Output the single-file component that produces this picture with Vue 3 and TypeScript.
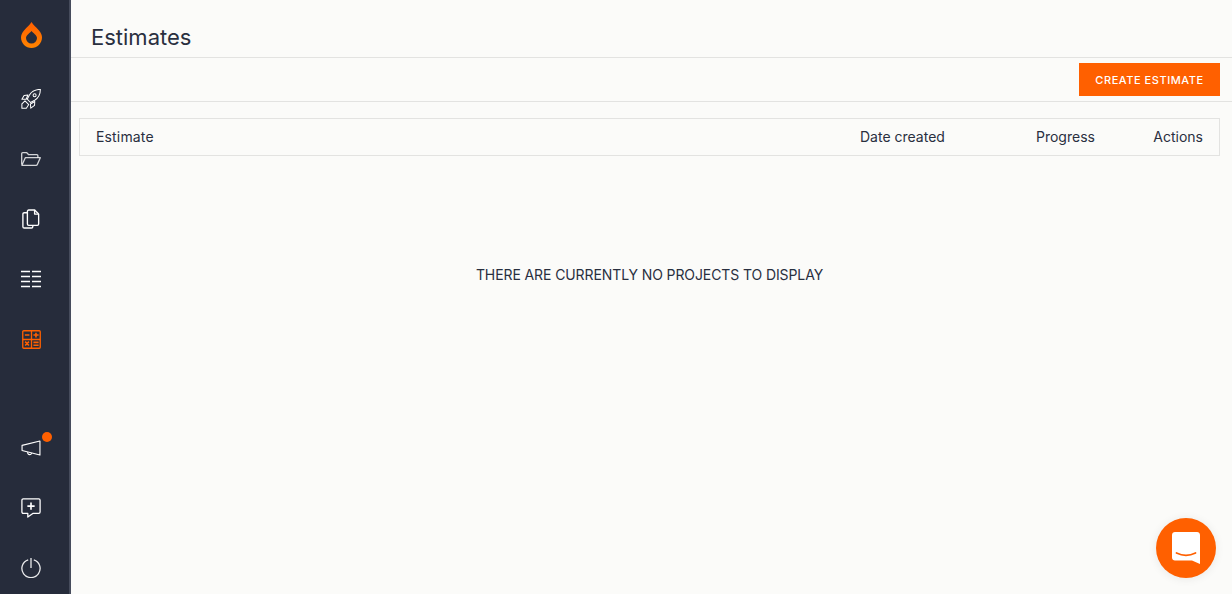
<script setup lang="ts">
const columns: { label: string; cls: string }[] = [
  { label: 'Estimate', cls: 'col-main' },
  { label: 'Date created', cls: 'col-date' },
  { label: 'Progress', cls: 'col-progress' },
  { label: 'Actions', cls: 'col-actions' },
]
</script>

<template>
  <div class="app">
    <aside class="sidebar">
      <div class="logo">
        <svg width="21" height="26" viewBox="0 0 21 26">
          <defs>
            <linearGradient id="drop" x1="0" y1="0" x2="0" y2="1">
              <stop offset="0" stop-color="#ff5f00" />
              <stop offset="1" stop-color="#ff8400" />
            </linearGradient>
          </defs>
          <path fill="url(#drop)" fill-rule="evenodd" d="M10.500 0C12 3 15 5 18 8.500 20 11 21 13 21 15.500 21 21.300 16.300 26 10.500 26S0 21.300 0 15.500C0 13 1 11 3 8.500 6 5 9 3 10.500 0ZM10.500 9C9 11 5 13 5 16a5.500 5.500 0 0 0 11 0C16 13 12 11 10.500 9Z" />
        </svg>
      </div>
      <nav class="nav">
        <a class="slot">
          <svg width="20" height="20" viewBox="1 1 22.500 22.500" fill="none" stroke="#fff" stroke-width="1.150" stroke-linejoin="round">
            <path d="M22.800 1.400c-5.700.1-9.800 2.400-12.300 6.400L8 12.500l3.700 3.700 4.700-2.500c4.200-2.500 6.400-6.500 6.400-12.300Z" />
            <circle cx="16.300" cy="8" r="1.700" />
            <path d="M8.800 7.800 4.500 8.200 2 12.600 6.800 12.600Z" />
            <path d="M16.500 15 16.200 19.500 12 22.600 11.600 17.800Z" />
            <path d="M5.500 14.300 9.700 18.500 7 22.600 2 22.600 2 17.800Z" />
          </svg>
        </a>
        <a class="slot">
          <svg width="20" height="14" viewBox="0 0 20 14" fill="none" stroke="#fff" stroke-opacity=".8" stroke-width="1.300" stroke-linejoin="round">
            <path d="M.700 12.500V1.700C.700 1.100 1.100.700 1.700.700h4.100l1.900 2h8.200c.6 0 1 .4 1 1V5.700" />
            <path d="M.900 13.300 4.300 5.700h15L16.300 12.500c-.2.500-.6.800-1.200.800Z" />
          </svg>
        </a>
        <a class="slot">
          <svg width="18" height="20" viewBox="0 0 20 22" fill="none" stroke="#fff" stroke-width="1.500" stroke-linejoin="round">
            <path d="M6 4H2.500C1.600 4 1 4.600 1 5.500v14C1 20.400 1.600 21 2.500 21h8c.9 0 1.500-.6 1.500-1.500V18" />
            <path d="M7.500 1H14v4.500h4.500V16.500c0 .9-.6 1.500-1.500 1.500H7.500C6.600 18 6 17.400 6 16.500v-14C6 1.600 6.600 1 7.500 1Z" />
            <path d="M14 1l4.500 4.500" />
          </svg>
        </a>
        <a class="slot">
          <svg width="20" height="18" viewBox="0 0 20 18" fill="none" stroke="#fff" stroke-width="1.500">
            <path d="M0 1.500h9M11 1.500h9M0 6.500h9M11 6.500h9M0 11.500h9M11 11.500h9M0 16.500h9M11 16.500h9" />
          </svg>
        </a>
        <a class="slot">
          <svg width="19" height="19" viewBox="0 0 20 20" fill="none" stroke="#ff6000" stroke-width="1.400">
            <rect x=".8" y=".8" width="18.400" height="18.400" rx="1" />
            <path d="M10 .8v18.400M.8 10h18.400" />
            <path stroke-width="1.700" d="M3 5.300h4.800M12 5.300h5.500M14.700 2.800v5.200M3.300 12.300l4 4M7.300 12.300l-4 4M12 13h5.500M12 16h5.500" />
          </svg>
        </a>
      </nav>
      <nav class="nav nav-bottom">
        <a class="slot">
          <span class="dot"></span>
          <svg width="20" height="16" viewBox="0 0 21 17" fill="none" stroke="#fff" stroke-width="1.200" stroke-linejoin="round">
            <path d="M20 1 1 5.700v5.400l19 4.900Z" />
            <path d="M7 12.800c-.3 1.700.7 2.700 2 2.700s2.300-.9 2.100-1.700" />
          </svg>
        </a>
        <a class="slot">
          <svg width="20" height="20" viewBox="0 0 22 22" fill="none" stroke="#fff" stroke-width="1.400" stroke-linejoin="round">
            <path d="M2.500 1h17C20.400 1 21 1.600 21 2.500v13c0 .9-.6 1.500-1.500 1.500H13l-5.500 4V17H2.500C1.600 17 1 16.400 1 15.500v-13C1 1.600 1.600 1 2.500 1Z" />
            <path stroke-width="1.800" d="M7 9h8M11 5v8" />
          </svg>
        </a>
        <a class="slot slot-last">
          <svg width="20" height="20" viewBox="0 0 20 20" fill="none" stroke="#fff" stroke-opacity=".9" stroke-width="1.300">
            <path d="M7.200 1.800a9.100 9.100 0 1 0 5.600 0" />
            <path d="M10 0V10" />
          </svg>
        </a>
      </nav>
    </aside>

    <main class="main">
      <header class="title-bar">
        <h1>Estimates</h1>
      </header>
      <div class="toolbar">
        <button class="create" type="button">CREATE ESTIMATE</button>
      </div>
      <section class="content">
        <div class="table-head">
          <span v-for="col in columns" :key="col.label" :class="col.cls">{{ col.label }}</span>
        </div>
        <p class="empty">THERE ARE CURRENTLY NO PROJECTS TO DISPLAY</p>
      </section>
    </main>

    <button class="chat" type="button" aria-label="Chat">
      <svg width="28" height="32" viewBox="0 0 28 32">
        <path fill="#fff" d="M3 0h22c1.700 0 3 1.300 3 3v29l-8-3.500H3c-1.700 0-3-1.300-3-3V3C0 1.300 1.300 0 3 0Z" />
        <path fill="none" stroke="#ff6000" stroke-width="1.800" stroke-linecap="round" d="M4.500 21c6 3 13 3 19 0" />
      </svg>
    </button>
  </div>
</template>

<style>
html, body { margin: 0; height: 100%; background: #fbfbf9; }
</style>

<style scoped>
.app {
  display: flex;
  height: 594px;
  overflow: hidden;
  position: relative;
  background: #fbfbf9;
  color: #292f3f;
  font-family: Inter, "Liberation Sans", sans-serif;
}
.sidebar {
  width: 69px;
  flex: none;
  background: #262c3b;
  border-right: 2px solid #464c5c;
  display: flex;
  flex-direction: column;
  align-items: stretch;
}
.logo {
  height: 69px;
  flex: none;
  display: flex;
  align-items: center;
  justify-content: center;
  padding-right: 6px;
}
.nav { display: flex; flex-direction: column; flex: none; }
.nav-bottom { margin-top: 49px; }
.slot {
  height: 60px;
  flex: none;
  display: flex;
  align-items: center;
  justify-content: center;
  position: relative;
  padding-right: 7px;
}
.slot-last {
  height: 56px;
  box-sizing: border-box;
  align-items: flex-start;
  padding-top: 20px;
}
.dot {
  position: absolute;
  top: 14px;
  left: 42px;
  width: 10px;
  height: 10px;
  border-radius: 50%;
  background: #ff6000;
}
.main { flex: 1; min-width: 0; display: flex; flex-direction: column; }
.title-bar {
  height: 58px;
  box-sizing: border-box;
  border-bottom: 1px solid #e3e3e1;
  padding: 0 20px;
  display: flex;
  align-items: center;
}
h1 {
  margin: 16px 0 0;
  font-size: 22px;
  line-height: 26px;
  font-weight: 400;
  color: #292f3f;
}
.toolbar {
  height: 44px;
  box-sizing: border-box;
  border-bottom: 1px solid #e3e3e1;
  padding: 5px 12px 0 0;
  display: flex;
  justify-content: flex-end;
  align-items: flex-start;
}
.create {
  width: 141px;
  height: 33px;
  border: 0;
  padding: 1px 0 0;
  background: #ff6000;
  color: #fff;
  font: 500 11px/32px Inter, "Liberation Sans", sans-serif;
  letter-spacing: .55px;
}
.content { padding: 16px 12px 0 8px; }
.table-head {
  height: 38px;
  box-sizing: border-box;
  border: 1px solid #e3e3e1;
  display: flex;
  align-items: center;
  padding: 0 16px;
  font-size: 14px;
  line-height: 16px;
}
.col-main { flex: 1; letter-spacing: .15px; }
.col-date { width: 85px; }
.col-progress { width: 59px; margin-left: 91px; }
.col-actions { width: 50px; margin-left: 58px; text-align: right; }
.empty {
  margin: 110px 0 0;
  text-align: center;
  font-size: 14px;
  letter-spacing: -.1px;
  line-height: 18px;
  color: #292f3f;
}
.chat {
  position: absolute;
  right: 16px;
  bottom: 16px;
  width: 60px;
  height: 60px;
  border: 0;
  padding: 0;
  border-radius: 50%;
  background: #ff6000;
  box-shadow: 0 1px 10px rgba(0, 0, 0, .08);
  display: flex;
  align-items: center;
  justify-content: center;
}
</style>
